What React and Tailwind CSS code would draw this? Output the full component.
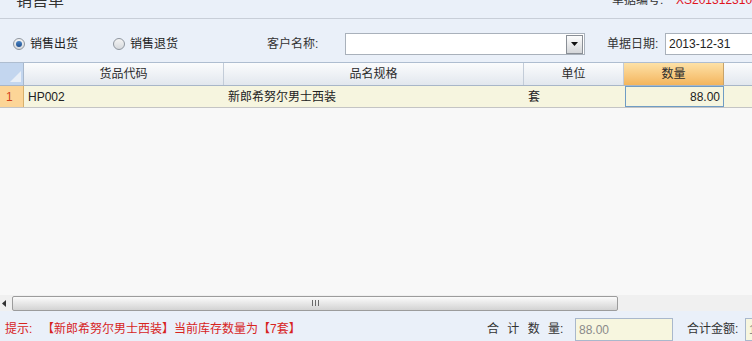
import React from "react";

// ── Small pieces ────────────────────────────────────────────

function Radio({ checked, label }) {
  return (
    <label className="flex items-center gap-[5px]">
      <span className="w-[12px] h-[12px] shrink-0 rounded-full border border-[#8e959e] bg-gradient-to-b from-[#f4f4f4] to-[#d6d9dd] flex items-center justify-center">
        {checked && <span className="w-[6px] h-[6px] rounded-full bg-gradient-to-b from-[#4c86c6] to-[#1f4f8f]"></span>}
      </span>
      <span className="text-[#222] whitespace-nowrap">{label}</span>
    </label>
  );
}

function HeadCell({ w, active, children }) {
  return (
    <div
      className={
        active
          ? "h-full shrink-0 flex items-center justify-center border-r border-[#c7a36a] bg-gradient-to-b from-[#fde1a6] to-[#f3b55c] text-[#2b2b2b]"
          : "h-full shrink-0 flex items-center justify-center border-r border-[#c3ccd8] bg-gradient-to-b from-[#fbfcfd] to-[#e2e7ee] text-[#2b2b2b]"
      }
      style={{ width: w }}
    >
      {children}
    </div>
  );
}

// ── Main ────────────────────────────────────────────────────

export default function App() {
  const cols = [
    { title: "货品代码", w: 200 },
    { title: "品名规格", w: 300 },
    { title: "单位", w: 100 },
    { title: "数量", w: 100, active: true },
    { title: "", w: 60 },
  ];

  return (
    <div className="w-[752px] h-[341px] overflow-hidden flex flex-col bg-[#eaf0f9] text-[12px] font-['Liberation_Sans','Noto_Sans_CJK_SC',sans-serif]">
      {/* title strip, scrolled up */}
      <div className="h-[19px] shrink-0 border-b border-[#c8ced8] flex items-start overflow-hidden">
        <div className="ml-[16px] w-[48px] shrink-0 -mt-[9px] text-[16px] leading-[20px] text-[#333] whitespace-nowrap">销售单</div>
        <div className="ml-[548px] shrink-0 -mt-[8px] leading-[16px] flex whitespace-nowrap">
          <span className="w-[64px] shrink-0 text-[#333]">单据编号:</span>
          <span className="text-[#e0141e]">XS201312310001</span>
        </div>
      </div>

      {/* form row */}
      <div className="shrink-0 pt-[14px] pb-[7px] flex items-center h-[43px]">
        <div className="pl-[13px] w-[113px] shrink-0">
          <Radio checked label="销售出货" />
        </div>
        <div className="w-[154px] shrink-0">
          <Radio label="销售退货" />
        </div>
        <div className="w-[78px] shrink-0 text-[#333] whitespace-nowrap">客户名称:</div>
        <div className="w-[240px] h-[22px] shrink-0 border border-[#a9b1bb] bg-white flex items-center justify-end pr-[1px]">
          <div className="w-[17px] h-[19px] border border-[#8a8f96] bg-gradient-to-b from-[#fdfdfd] to-[#d4d6d9] flex items-center justify-center">
            <svg width="7" height="4" viewBox="0 0 7 4"><polygon points="0,0 7,0 3.5,4" fill="#111" /></svg>
          </div>
        </div>
        <div className="ml-[22px] w-[58px] shrink-0 text-[#333] whitespace-nowrap">单据日期:</div>
        <div className="w-[120px] h-[22px] shrink-0 border border-[#a9b1bb] bg-white flex items-center pl-[3px] text-[#222]">
          2013-12-31
        </div>
      </div>

      {/* grid */}
      <div className="flex-1 flex flex-col bg-[#f8f8f8] border-t border-[#aebdd0] overflow-hidden">
        <div className="h-[23px] shrink-0 flex border-b border-[#a8b6c8]">
          <div className="w-[24px] h-full shrink-0 bg-[#c3d6ef] border-r border-[#a8b8cc] flex items-end justify-end pr-[2px] pb-[3px]">
            <svg width="11" height="11" viewBox="0 0 11 11"><polygon points="11,0 11,11 0,11" fill="#e9eff7" /></svg>
          </div>
          {cols.map((c, i) => (
            <HeadCell key={i} w={c.w} active={c.active}>{c.title}</HeadCell>
          ))}
        </div>

        <div className="h-[22px] shrink-0 flex bg-[#f6f5df] border-b border-[#c4c4c4] text-[#222]">
          <div className="w-[24px] h-full shrink-0 bg-[#fcd597] border-r border-[#d8b06c] flex items-center pl-[6px] text-[#d2421c]">1</div>
          <div className="w-[200px] shrink-0 flex items-center pl-[4px]">HP002</div>
          <div className="w-[300px] shrink-0 flex items-center pl-[4px]">新郎希努尔男士西装</div>
          <div className="w-[100px] shrink-0 flex items-center pl-[4px]">套</div>
          <div className="w-[99px] shrink-0 flex items-center justify-end pr-[3px] border border-[#6f9cc4] ml-px">88.00</div>
          <div className="flex-1"></div>
        </div>

        <div className="flex-1"></div>

        {/* horizontal scrollbar */}
        <div className="h-[16px] shrink-0 flex items-center bg-[#f0f0f0]">
          <div className="w-[12px] shrink-0 flex items-center pl-[2px]">
            <svg width="4" height="7" viewBox="0 0 4 7"><polygon points="4,0 4,7 0,3.5" fill="#333" /></svg>
          </div>
          <div className="w-[606px] h-[15px] shrink-0 rounded-[2px] border border-[#9c9c9c] bg-gradient-to-b from-[#fbfbfb] to-[#d3d3d3] flex items-center justify-center gap-[2px]">
            <span className="w-px h-[6px] bg-[#6a6a6a]"></span>
            <span className="w-px h-[6px] bg-[#6a6a6a]"></span>
            <span className="w-px h-[6px] bg-[#6a6a6a]"></span>
          </div>
        </div>
      </div>

      {/* footer */}
      <div className="h-[30px] shrink-0 pt-[7px] flex items-start">
        <div className="h-[22px] w-[487px] shrink-0 flex items-center pl-[5px] text-[#d7241e] whitespace-nowrap">
          <span className="w-[37px]">提示:</span>
          <span>【新郎希努尔男士西装】当前库存数量为【7套】</span>
        </div>
        <div className="h-[22px] w-[88px] shrink-0 flex items-center text-[#333] whitespace-nowrap [word-spacing:5px]">合 计 数 量:</div>
        <div className="h-[23px] w-[98px] shrink-0 border border-[#a9b8cc] bg-[#f7f6df] flex items-center pl-[3px] text-[#8a8a8a]">88.00</div>
        <div className="h-[22px] ml-[14px] w-[58px] shrink-0 flex items-center text-[#333] whitespace-nowrap">合计金额:</div>
        <div className="h-[23px] w-[60px] shrink-0 border border-[#a9b8cc] bg-[#f7f6df] flex items-center pl-[3px] text-[#8a8a8a]">1</div>
      </div>
    </div>
  );
}
